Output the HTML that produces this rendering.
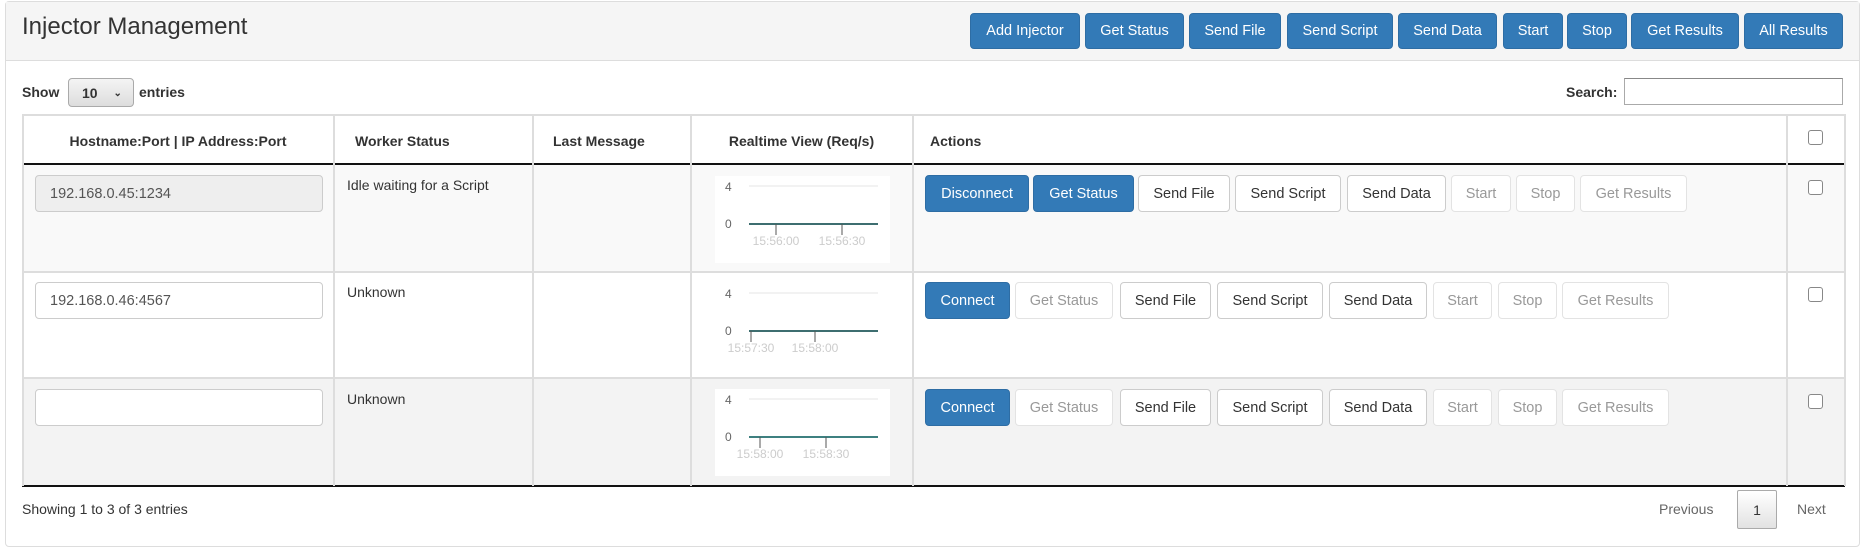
<!DOCTYPE html>
<html><head><meta charset="utf-8"><style>
*{box-sizing:border-box;margin:0;padding:0}
body{width:1867px;height:556px;background:#fff;font-family:"Liberation Sans",Arial,sans-serif;font-size:14px;color:#333;position:relative;overflow:hidden}
.a{position:absolute}
.panel{left:5px;top:1px;width:1855px;height:546px;border:1px solid #ddd;border-radius:4px}
.head{left:6px;top:2px;width:1853px;height:59px;background:#f5f5f5;border-bottom:1px solid #ddd}
.btn{position:absolute;display:flex;align-items:center;justify-content:center;border:1px solid #ccc;border-radius:4px;background:#fff;color:#333;white-space:nowrap;font-size:14.5px}
.p{background:#337ab7;border-color:#2e6da4;color:#fff}
.d{color:#999;border-color:#e3e3e3}
.vl{position:absolute;width:2px;background:#ddd}
.hl{position:absolute;height:2px;background:#ddd}
.in{position:absolute;left:35px;width:288px;height:37px;border:1px solid #ccc;border-radius:4px;background:#fff;padding:0 14px;display:flex;align-items:center;font-size:14.5px;color:#555}
.cb{position:absolute;left:1808px;width:15px;height:15px;border:1px solid #888;border-radius:3px;background:#fff}
svg text{font-family:"Liberation Sans",Arial,sans-serif}
</style></head><body>
<div class="a panel"></div>
<div class="a head"></div>
<div class="a" style="left:22px;top:13px;font-size:24px;color:#333">Injector Management</div>

<div class="btn p" style="left:970px;top:13px;width:110px;height:36px">Add Injector</div>
<div class="btn p" style="left:1085px;top:13px;width:99px;height:36px">Get Status</div>
<div class="btn p" style="left:1189px;top:13px;width:92px;height:36px">Send File</div>
<div class="btn p" style="left:1287px;top:13px;width:106px;height:36px">Send Script</div>
<div class="btn p" style="left:1398px;top:13px;width:99px;height:36px">Send Data</div>
<div class="btn p" style="left:1503px;top:13px;width:60px;height:36px">Start</div>
<div class="btn p" style="left:1567px;top:13px;width:60px;height:36px">Stop</div>
<div class="btn p" style="left:1631px;top:13px;width:108px;height:36px">Get Results</div>
<div class="btn p" style="left:1744px;top:13px;width:99px;height:36px">All Results</div>

<div class="a" style="left:22px;top:84px;font-weight:bold">Show</div>
<div class="a" style="left:68px;top:78px;width:66px;height:29px;border:1px solid #aaa;border-radius:4px;background:linear-gradient(#f4f4f4,#ddd);font-weight:bold;padding:6px 0 0 13px">10 <span style="font-size:10px;margin-left:12px;position:relative;top:-2px">&#8964;</span></div>
<div class="a" style="left:139px;top:84px;font-weight:bold">entries</div>
<div class="a" style="left:1566px;top:84px;font-weight:bold">Search:</div>
<div class="a" style="left:1624px;top:78px;width:219px;height:27px;border:1px solid #aaa;border-top-color:#888"></div>

<div class="a" style="left:23px;top:164px;width:1822px;height:108px;background:#f9f9f9"></div>
<div class="a" style="left:23px;top:378px;width:1822px;height:108px;background:#f3f3f3"></div>
<div class="hl" style="left:23px;top:114px;width:1822px"></div>
<div class="a" style="left:23px;top:163px;width:1822px;height:2px;background:#111"></div>
<div class="hl" style="left:23px;top:271px;width:1822px"></div>
<div class="hl" style="left:23px;top:377px;width:1822px"></div>
<div class="a" style="left:22px;top:485px;width:1823px;height:2px;background:#111"></div>
<div class="vl" style="left:22px;top:114px;height:372px"></div>
<div class="vl" style="left:333px;top:114px;height:372px"></div>
<div class="vl" style="left:532px;top:114px;height:372px"></div>
<div class="vl" style="left:690px;top:114px;height:372px"></div>
<div class="vl" style="left:912px;top:114px;height:372px"></div>
<div class="vl" style="left:1786px;top:114px;height:372px"></div>
<div class="vl" style="left:1844px;top:114px;height:372px"></div>

<div class="a" style="left:23px;width:310px;top:133px;text-align:center;font-weight:bold">Hostname:Port | IP Address:Port</div>
<div class="a" style="left:355px;top:133px;font-weight:bold">Worker Status</div>
<div class="a" style="left:553px;top:133px;font-weight:bold">Last Message</div>
<div class="a" style="left:691px;width:221px;top:133px;text-align:center;font-weight:bold">Realtime View (Req/s)</div>
<div class="a" style="left:930px;top:133px;font-weight:bold">Actions</div>
<div class="cb" style="top:130px"></div>

<div class="in" style="top:175px;background:#eee">192.168.0.45:1234</div>
<div class="a" style="left:347px;top:177px">Idle waiting for a Script</div>
<svg class="a" style="left:715px;top:176px" width="175" height="87"><rect width="175" height="87" fill="#fff"/><line x1="34" y1="10" x2="163" y2="10" stroke="#e6e6e6"/><text x="10" y="15" font-size="12" fill="#666">4</text><text x="10" y="52" font-size="12" fill="#666">0</text><line x1="34" y1="48" x2="163" y2="48" stroke="#3e6e70" stroke-width="2"/><line x1="61" y1="48" x2="61" y2="59" stroke="#555"/><line x1="127" y1="48" x2="127" y2="59" stroke="#555"/><text x="61" y="69" font-size="12" fill="#ccc" text-anchor="middle">15:56:00</text><text x="127" y="69" font-size="12" fill="#ccc" text-anchor="middle">15:56:30</text></svg>
<div class="btn p" style="left:925px;top:175px;width:104px;height:37px">Disconnect</div>
<div class="btn p" style="left:1033px;top:175px;width:101px;height:37px">Get Status</div>
<div class="btn" style="left:1138px;top:175px;width:92px;height:37px">Send File</div>
<div class="btn" style="left:1235px;top:175px;width:106px;height:37px">Send Script</div>
<div class="btn" style="left:1347px;top:175px;width:99px;height:37px">Send Data</div>
<div class="btn d" style="left:1451px;top:175px;width:60px;height:37px">Start</div>
<div class="btn d" style="left:1516px;top:175px;width:59px;height:37px">Stop</div>
<div class="btn d" style="left:1580px;top:175px;width:107px;height:37px">Get Results</div>
<div class="cb" style="top:180px"></div>

<div class="in" style="top:282px">192.168.0.46:4567</div>
<div class="a" style="left:347px;top:284px">Unknown</div>
<svg class="a" style="left:715px;top:283px" width="175" height="87"><line x1="34" y1="10" x2="163" y2="10" stroke="#e6e6e6"/><text x="10" y="15" font-size="12" fill="#666">4</text><text x="10" y="52" font-size="12" fill="#666">0</text><line x1="34" y1="48" x2="163" y2="48" stroke="#3e6e70" stroke-width="2"/><line x1="36" y1="48" x2="36" y2="59" stroke="#555"/><line x1="100" y1="48" x2="100" y2="59" stroke="#555"/><text x="36" y="69" font-size="12" fill="#ccc" text-anchor="middle">15:57:30</text><text x="100" y="69" font-size="12" fill="#ccc" text-anchor="middle">15:58:00</text></svg>
<div class="btn p" style="left:925px;top:282px;width:85px;height:37px">Connect</div>
<div class="btn d" style="left:1015px;top:282px;width:98px;height:37px">Get Status</div>
<div class="btn" style="left:1120px;top:282px;width:91px;height:37px">Send File</div>
<div class="btn" style="left:1217px;top:282px;width:106px;height:37px">Send Script</div>
<div class="btn" style="left:1329px;top:282px;width:98px;height:37px">Send Data</div>
<div class="btn d" style="left:1433px;top:282px;width:59px;height:37px">Start</div>
<div class="btn d" style="left:1498px;top:282px;width:59px;height:37px">Stop</div>
<div class="btn d" style="left:1562px;top:282px;width:107px;height:37px">Get Results</div>
<div class="cb" style="top:287px"></div>

<div class="in" style="top:389px"></div>
<div class="a" style="left:347px;top:391px">Unknown</div>
<svg class="a" style="left:715px;top:389px" width="175" height="87"><rect width="175" height="87" fill="#fff"/><line x1="34" y1="10" x2="163" y2="10" stroke="#e6e6e6"/><text x="10" y="15" font-size="12" fill="#666">4</text><text x="10" y="52" font-size="12" fill="#666">0</text><line x1="34" y1="48" x2="163" y2="48" stroke="#3e8080" stroke-width="2"/><line x1="45" y1="48" x2="45" y2="59" stroke="#555"/><line x1="111" y1="48" x2="111" y2="59" stroke="#555"/><text x="45" y="69" font-size="12" fill="#ccc" text-anchor="middle">15:58:00</text><text x="111" y="69" font-size="12" fill="#ccc" text-anchor="middle">15:58:30</text></svg>
<div class="btn p" style="left:925px;top:389px;width:85px;height:37px">Connect</div>
<div class="btn d" style="left:1015px;top:389px;width:98px;height:37px">Get Status</div>
<div class="btn" style="left:1120px;top:389px;width:91px;height:37px">Send File</div>
<div class="btn" style="left:1217px;top:389px;width:106px;height:37px">Send Script</div>
<div class="btn" style="left:1329px;top:389px;width:98px;height:37px">Send Data</div>
<div class="btn d" style="left:1433px;top:389px;width:59px;height:37px">Start</div>
<div class="btn d" style="left:1498px;top:389px;width:59px;height:37px">Stop</div>
<div class="btn d" style="left:1562px;top:389px;width:107px;height:37px">Get Results</div>
<div class="cb" style="top:394px"></div>

<div class="a" style="left:22px;top:501px">Showing 1 to 3 of 3 entries</div>
<div class="a" style="left:1659px;top:501px;color:#666">Previous</div>
<div class="a" style="left:1737px;top:490px;width:40px;height:39px;border:1px solid #aaa;border-radius:2px;background:linear-gradient(#fff,#e2e2e2);text-align:center;padding-top:11px">1</div>
<div class="a" style="left:1797px;top:501px;color:#666">Next</div>
</body></html>
